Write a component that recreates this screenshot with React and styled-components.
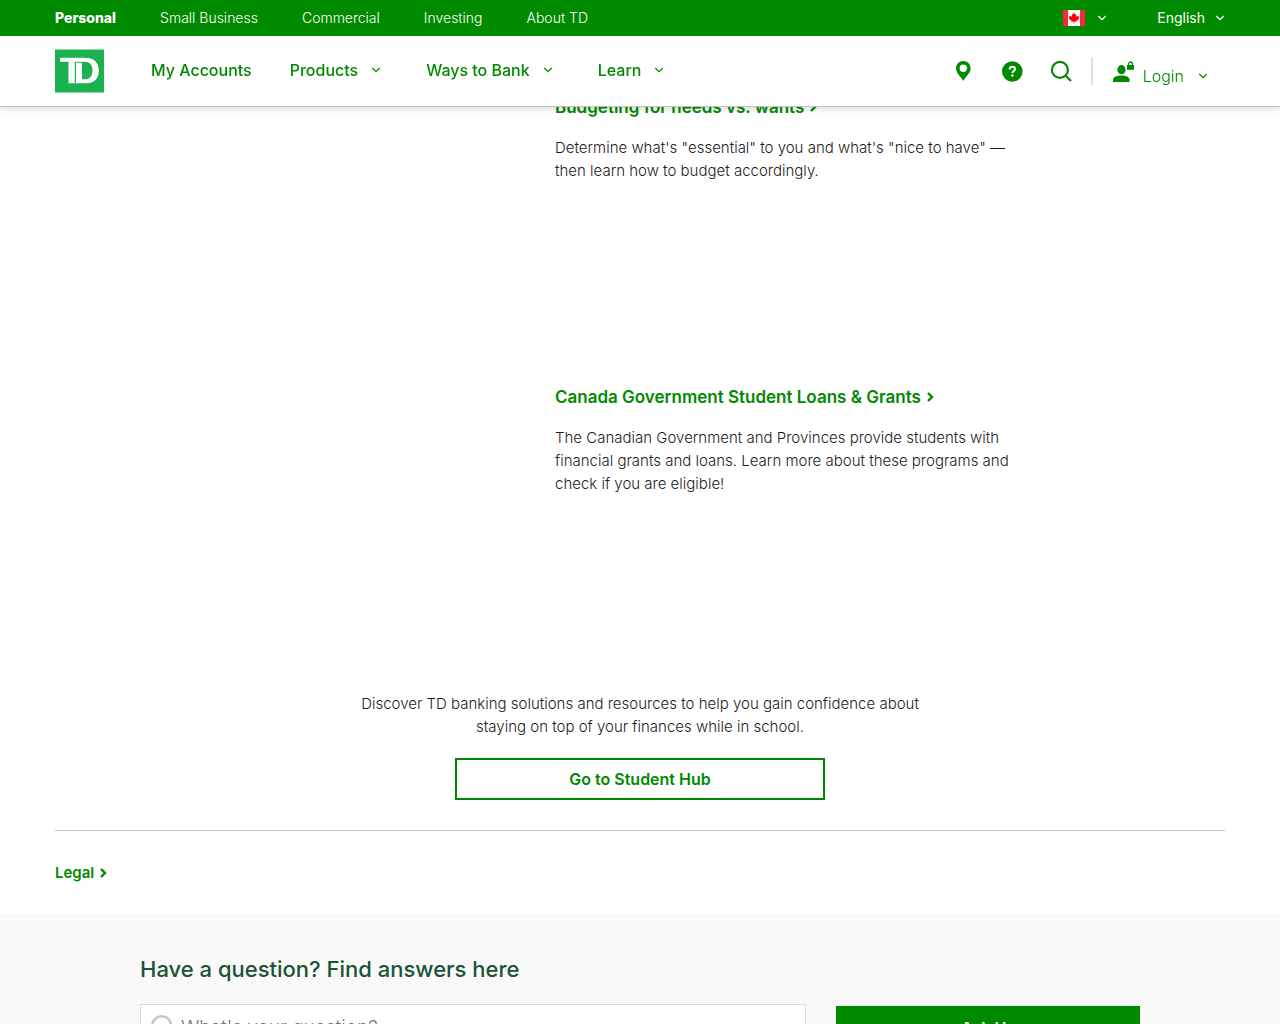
import React from "react";
import styled, { createGlobalStyle } from "styled-components";

const green = "#008a00";

const GlobalStyle = createGlobalStyle`
  *, *::before, *::after { box-sizing: border-box; }
  html { scrollbar-width: none; }
  body {
    margin: 0;
    background: #fff;
    color: #1c1c1c;
    font-family: Inter, "Liberation Sans", sans-serif;
    font-size: 15px;
    font-weight: 300;
    line-height: 23px;
  }
  h2, h3, p { margin: 0; }
  a { color: inherit; text-decoration: none; }
  button, input { font: inherit; }
`;

const Container = styled.div`
  width: 100%;
  max-width: 1170px;
  margin: 0 auto;
`;

const Header = styled.header`
  position: fixed;
  top: 0;
  left: 0;
  right: 0;
  z-index: 10;
  background: #fff;
  border-bottom: 1px solid #c4c4c4;
  box-shadow: 0 2px 6px rgba(0, 0, 0, 0.15);
`;

const UtilityBar = styled.div`
  background: ${green};
  color: #fff;
`;

const UtilityRow = styled(Container)`
  display: flex;
  justify-content: space-between;
  align-items: center;
  height: 36px;
`;

const UtilityNav = styled.nav`
  display: flex;
  gap: 44px;
`;

const UtilityLink = styled.a`
  font-size: 14px;
  line-height: 22px;
  font-weight: ${(p) => (p.$active ? 800 : 300)};
`;

const Locale = styled.div`
  display: flex;
  gap: 50px;
`;

const MenuButton = styled.button`
  display: flex;
  align-items: center;
  gap: ${(p) => p.$gap || 12}px;
  padding: 0;
  border: 0;
  background: none;
  color: inherit;
  font-size: 14px;
  line-height: 22px;
  font-weight: 400;
  cursor: pointer;
`;

const MainRow = styled(Container)`
  display: flex;
  align-items: center;
  height: 70px;
`;

const LogoLink = styled.a`
  display: flex;
  margin-right: 47px;
`;

const MainNav = styled.nav`
  display: flex;
  gap: 38px;
  padding-bottom: 2px;
  color: ${green};
`;

const NavItem = styled.a`
  display: flex;
  align-items: center;
  gap: 13px;
  font-size: 16px;
  font-weight: 500;
  padding-right: ${(p) => (p.$menu ? 7 : 0)}px;
`;

const Tools = styled.div`
  display: flex;
  align-items: center;
  gap: 27px;
  margin-left: auto;
  padding-right: 17px;
  color: ${green};
`;

const ToolLink = styled.a`
  display: flex;
`;

const Account = styled.div`
  display: flex;
  align-items: center;
  height: 28px;
  margin-left: -8px;
  padding-left: 20px;
  border-left: 2px solid #e0e0e0;
`;

const LoginButton = styled(MenuButton)`
  align-items: center;
  font-size: 16px;
  font-weight: 300;
  gap: 8px;
`;

const LoginLabel = styled.span`
  display: flex;
  align-items: center;
  gap: 14px;
  padding-top: 10px;
`;

const Main = styled.main`
  padding-top: 94px;
`;

const Article = styled.article`
  display: grid;
  grid-template-columns: 270px 1fr;
  gap: 30px;
  max-width: 770px;
  min-height: 290px;
  margin: 0 auto;
`;

const ArticleText = styled.div`
  grid-column: 2;
  display: flex;
  flex-direction: column;
  gap: 16px;
`;

const ArticleTitle = styled.h3`
  color: ${green};
  font-size: 17px;
  font-weight: 600;
  line-height: 26px;
`;

const TitleLink = styled.a`
  display: flex;
  align-items: center;
  gap: 6px;
`;

const Hub = styled.section`
  display: flex;
  flex-direction: column;
  align-items: center;
  gap: 20px;
  padding: 18px 0 30px;
  border-bottom: 1px solid #c8c8c8;
  text-align: center;
`;

const HubText = styled.p`
  max-width: 570px;
`;

const OutlineLink = styled.a`
  width: 100%;
  max-width: 370px;
  padding: 8px 16px;
  border: 2px solid ${green};
  color: ${green};
  font-size: 16px;
  font-weight: 600;
  line-height: 22px;
`;

const Legal = styled.div`
  padding: 30px 0;
`;

const LegalLink = styled.a`
  display: inline-flex;
  align-items: center;
  gap: 6px;
  color: ${green};
  font-weight: 600;
`;

const Question = styled.section`
  padding: 40px 20px;
  background: #f9f9f9;
`;

const QuestionInner = styled.div`
  max-width: 1000px;
  margin: 0 auto;
`;

const QuestionTitle = styled.h2`
  color: #1a5336;
  font-size: 22px;
  font-weight: 500;
  line-height: 30px;
`;

const AskForm = styled.form`
  display: flex;
  align-items: center;
  gap: 30px;
  margin-top: 20px;
`;

const SearchBox = styled.label`
  flex: 1;
  display: flex;
  align-items: center;
  gap: 5px;
  height: 46px;
  padding: 0 9px;
  border: 1px solid #dcdcdc;
  background: #fff;
  color: #c8c8c8;
`;

const SearchInput = styled.input`
  flex: 1;
  min-width: 0;
  padding: 0;
  border: 0;
  outline: 0;
  background: none;
  color: #1c1c1c;
  font-size: 19px;
  &::placeholder { color: #767676; opacity: 1; }
`;

const AskButton = styled.button`
  width: 304px;
  height: 42px;
  padding: 2px 0 0;
  border: 0;
  background: ${green};
  color: #fff;
  font-size: 16px;
  font-weight: 600;
`;

const Chevron = () => (
  <svg width="10" height="6" viewBox="0 0 10 6" fill="none" stroke="currentColor" strokeWidth="1.3" aria-hidden="true">
    <path d="M1.300 1L5 4.700 8.700 1" />
  </svg>
);

const Arrow = () => (
  <svg width="7" height="10" viewBox="0 0 7 10" fill="none" stroke="currentColor" strokeWidth="2.4" aria-hidden="true">
    <path d="M1 1l4 4-4 4" />
  </svg>
);

const Logo = () => (
  <svg width="49" height="44" viewBox="0 0 49 44" role="img" aria-label="TD">
    <path fill="#1ab24f" d="M0 .5h49v43H0z" />
    <path
      fill="#fff"
      fillRule="evenodd"
      d="M5 8.700h24.500c9.500 0 14.300 4.500 14.300 12.900 0 8-4 12.700-12.500 12.700H13.500V12.800H5zM27 12.800v17.500h2.500c5.500 0 8-3 8-8.800s-2.500-8.700-8-8.700z"
    />
    <path fill="#1ab24f" d="M19.800 12.800H27v1h-6v20.500h-1.200z" />
  </svg>
);

const Flag = () => (
  <svg width="22" height="16" viewBox="0 0 22 16" role="img" aria-label="Canada">
    <path fill="#fff" d="M0 0h22v16H0z" />
    <path fill="#f8293b" d="M0 0h5v16H0zM17 0h5v16h-5z" />
    <path fill="#f00" d="M11 2.500l1.200 2 1.200-.5-.4 3 1.600-1.400.3.900 1.500-.2-.6 1.700.6.400-2.900 2.300.2 1-2.400-.3v2.300h-.6v-2.300l-2.400.3.200-1-2.900-2.300.6-.4-.6-1.700 1.500.2.300-.9L9 7l-.4-3 1.200.5z" />
  </svg>
);

const Pin = () => (
  <svg width="20" height="22" viewBox="0 0 20 22" aria-hidden="true">
    <path fill="currentColor" fillRule="evenodd" d="M9.300 1C5.200 1 2 4.200 2 8.300c0 4.900 4.800 8.200 7.300 12.700 2.500-4.500 7.300-7.800 7.300-12.700C16.600 4.200 13.400 1 9.300 1zM9.300 4.600a3.700 3.700 0 110 7.400 3.700 3.700 0 010-7.400z" />
  </svg>
);

const Help = () => (
  <svg width="22" height="22" viewBox="0 0 22 22" fill="none" aria-hidden="true">
    <circle cx="11.300" cy="11.500" r="10.300" fill="currentColor" />
    <path stroke="#fff" strokeWidth="2" d="M8.600 9.400c0-1.600 1.100-2.600 2.800-2.600s2.600 1 2.600 2.300c0 1.900-2.600 1.900-2.600 4" />
    <circle cx="11.400" cy="15.500" r="1.200" fill="#fff" />
  </svg>
);

const Search = ({ size = 22 }) => (
  <svg width={size} height={size} viewBox="0 0 22 22" fill="none" stroke="currentColor" strokeWidth="2.200" aria-hidden="true">
    <circle cx="9.900" cy="9.900" r="8" />
    <path d="M15.500 15.500l5.500 5.500" />
  </svg>
);

const UserLock = () => (
  <svg width="22" height="21" viewBox="0 0 22 21" fill="currentColor" aria-hidden="true">
    <ellipse cx="8.500" cy="8.700" rx="4.100" ry="4.600" />
    <path d="M0 21v-2.300c0-2.600 3.600-4.200 8.500-4.200s8 1.600 8 4.200V21z" />
    <path d="M14 4h7v4.800h-7z" />
    <path fill="none" stroke="currentColor" strokeWidth="1.300" d="M15.500 4.200V3a2 2 0 014 0v1.200" />
  </svg>
);

const sites = ["Personal", "Small Business", "Commercial", "Investing", "About TD"];

const menus = [
  { label: "My Accounts" },
  { label: "Products", menu: true },
  { label: "Ways to Bank", menu: true },
  { label: "Learn", menu: true },
];

const articles = [
  {
    title: "Budgeting for needs vs. wants",
    text: `Determine what's "essential" to you and what's "nice to have" — then learn how to budget accordingly.`,
  },
  {
    title: "Canada Government Student Loans & Grants",
    text: "The Canadian Government and Provinces provide students with financial grants and loans. Learn more about these programs and check if you are eligible!",
  },
];

export default function App() {
  return (
    <>
      <GlobalStyle />
      <Header>
        <UtilityBar>
          <UtilityRow>
            <UtilityNav aria-label="Sites">
              {sites.map((site, i) => (
                <UtilityLink key={site} href="#" $active={i === 0}>{site}</UtilityLink>
              ))}
            </UtilityNav>
            <Locale>
              <MenuButton type="button"><Flag /><Chevron /></MenuButton>
              <MenuButton type="button" $gap={10}>English<Chevron /></MenuButton>
            </Locale>
          </UtilityRow>
        </UtilityBar>
        <MainRow>
          <LogoLink href="#"><Logo /></LogoLink>
          <MainNav aria-label="Main">
            {menus.map(({ label, menu }) => (
              <NavItem key={label} href="#" $menu={menu}>
                {label}
                {menu && <Chevron />}
              </NavItem>
            ))}
          </MainNav>
          <Tools>
            <ToolLink href="#" aria-label="Find a branch"><Pin /></ToolLink>
            <ToolLink href="#" aria-label="Help"><Help /></ToolLink>
            <ToolLink href="#" aria-label="Search"><Search /></ToolLink>
            <Account>
              <LoginButton type="button">
                <UserLock />
                <LoginLabel>Login<Chevron /></LoginLabel>
              </LoginButton>
            </Account>
          </Tools>
        </MainRow>
      </Header>
      <Main>
        <Container>
          {articles.map(({ title, text }) => (
            <Article key={title}>
              <ArticleText>
                <ArticleTitle>
                  <TitleLink href="#">{title}<Arrow /></TitleLink>
                </ArticleTitle>
                <p>{text}</p>
              </ArticleText>
            </Article>
          ))}
          <Hub>
            <HubText>
              Discover TD banking solutions and resources to help you gain confidence about staying on top of your finances while in school.
            </HubText>
            <OutlineLink href="#">Go to Student Hub</OutlineLink>
          </Hub>
          <Legal>
            <LegalLink href="#">Legal<Arrow /></LegalLink>
          </Legal>
        </Container>
        <Question>
          <QuestionInner>
            <QuestionTitle>Have a question? Find answers here</QuestionTitle>
            <AskForm onSubmit={(e) => e.preventDefault()}>
              <SearchBox>
                <Search size={26} />
                <SearchInput type="text" placeholder="What's your question?" aria-label="What's your question?" />
              </SearchBox>
              <AskButton type="submit">Ask Us</AskButton>
            </AskForm>
          </QuestionInner>
        </Question>
      </Main>
    </>
  );
}
